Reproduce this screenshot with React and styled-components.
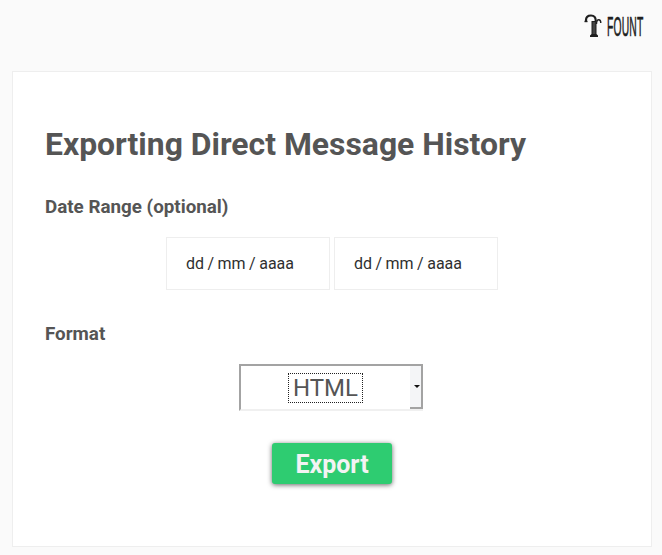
import React from "react";
import styled, { createGlobalStyle } from "styled-components";

const Global = createGlobalStyle`
  html, body { margin: 0; padding: 0; background: #fafafa; }
  body { font-family: Roboto, "Liberation Sans", sans-serif; color: #555; }
  * { box-sizing: border-box; }
`;

const Page = styled.div`
  width: 662px;
  height: 555px;
  padding: 0 10px 8px 12px;
  display: flex;
  flex-direction: column;
  overflow: hidden;
`;

const Header = styled.header`
  height: 71px;
  flex: none;
  display: flex;
  justify-content: flex-end;
  padding: 14px 9px 0 0;
`;

const Logo = styled.div`
  display: flex;
  align-items: flex-start;
  gap: 5px;
  height: 24px;
  color: #1f1f1f;
`;

const LogoWord = styled.span`
  display: block;
  width: 36px;
  margin-top: -1px;
  font-family: "Liberation Sans", sans-serif;
  font-size: 27.6px;
  font-weight: 400;
  line-height: 28px;
  -webkit-text-stroke: 0.6px #1f1f1f;
  letter-spacing: 0.4px;
  transform: scaleX(0.375);
  transform-origin: left center;
  white-space: nowrap;
`;

const Card = styled.main`
  flex: 1;
  background: #fff;
  border: 1px solid #eee;
  padding: 53px 32px 0;
`;

const Title = styled.h1`
  margin: 0;
  font-size: 31.9px;
  line-height: 38px;
  font-weight: 700;
  color: #555;
`;

const Label = styled.h2`
  margin: ${(p) => p.$top}px 0 0;
  font-size: 18.8px;
  line-height: 22px;
  font-weight: 700;
  color: #555;
`;

const Dates = styled.div`
  display: flex;
  justify-content: center;
  gap: 4px;
  margin-top: 19px;
`;

const DateField = styled.div`
  width: 164px;
  height: 53px;
  border: 1px solid #eee;
  padding-left: 19px;
  display: flex;
  align-items: center;
  font-family: Roboto, sans-serif;
  font-size: 16px;
  word-spacing: -0.5px;
  color: #2f2f2f;
`;

const SelectRow = styled.div`
  display: flex;
  justify-content: center;
  margin-top: 19px;
  padding-right: 2px;
`;

const SelectBox = styled.div`
  width: 184px;
  height: 47px;
  border-top: 2px solid #a3a3a3;
  border-left: 2px solid #a3a3a3;
  border-bottom: 2px solid #f0f0f0;
  display: flex;
  background: #fff;
`;

const SelectValue = styled.div`
  flex: 1;
  display: flex;
  align-items: center;
  justify-content: center;
`;

const SelectText = styled.span`
  border: 1px dotted #222;
  font-family: Roboto, sans-serif;
  font-size: 24px;
  line-height: 28px;
  padding: 0 4px;
  color: #555;
`;

const SelectArrow = styled.div`
  width: 13px;
  background: #f4f5f7;
  border-right: 2px solid #a3a3a3;
  border-bottom: 2px solid #a3a3a3;
  display: flex;
  align-items: center;
  justify-content: center;
  &::after {
    content: "";
    width: 0;
    height: 0;
    border-left: 3px solid transparent;
    border-right: 3px solid transparent;
    border-top: 3px solid #111;
    transform: translateX(1px);
  }
`;

const ButtonRow = styled.div`
  display: flex;
  justify-content: center;
  margin-top: 32px;
`;

const Button = styled.button`
  width: 120px;
  height: 41px;
  border: 0;
  border-radius: 3px;
  background: #2ecc71;
  color: #f3f3f3;
  font-family: Roboto, sans-serif;
  font-size: 25px;
  font-weight: 700;
  box-shadow: 0 1px 5px rgba(0, 0, 0, 0.6);
  padding: 2px 0 0;
`;

export default function App() {
  return (
    <>
      <Global />
      <Page>
        <Header>
          <Logo>
            <svg width="18" height="24" viewBox="0 0 18 24" fill="none">
              <path d="M2 8V6C2 3 4 1.500 7 1.500C10 1.500 11.800 3.500 11.800 7" stroke="#1f1f1f" strokeWidth="2.200" />
              <path d="M0.500 7.500H3.500" stroke="#1f1f1f" strokeWidth="1.400" />
              <path d="M7.500 7H12.500V20L14 21.500V23H6V21.500L7.500 20Z" fill="#1f1f1f" />
              <path d="M9.200 8V20M10.800 8V20" stroke="#8a8a8a" strokeWidth="0.500" />
              <path d="M12.500 10C12.500 7 13.600 5.800 14.800 5.800C16 5.800 16.800 6.800 16.800 9" stroke="#1f1f1f" strokeWidth="1.400" />
            </svg>
            <LogoWord>FOUNT</LogoWord>
          </Logo>
        </Header>
        <Card>
          <Title>Exporting Direct Message History</Title>
          <Label $top={33}>Date Range (optional)</Label>
          <Dates>
            <DateField>dd / mm / aaaa</DateField>
            <DateField>dd / mm / aaaa</DateField>
          </Dates>
          <Label $top={33}>Format</Label>
          <SelectRow>
            <SelectBox>
              <SelectValue>
                <SelectText>HTML</SelectText>
              </SelectValue>
              <SelectArrow />
            </SelectBox>
          </SelectRow>
          <ButtonRow>
            <Button>Export</Button>
          </ButtonRow>
        </Card>
      </Page>
    </>
  );
}
